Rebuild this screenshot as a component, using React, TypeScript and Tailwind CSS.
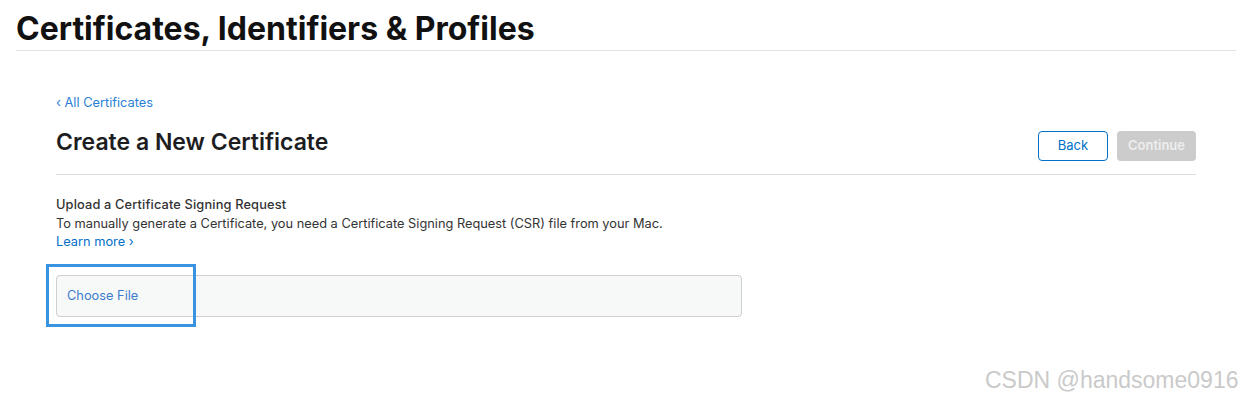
import React from "react";

export default function App() {
  return (
    <div className="w-[1242px] h-[399px] bg-white relative overflow-hidden" style={{ fontFamily: "Inter, 'Noto Sans', sans-serif" }}>
      <div className="pl-4 pr-[6px]">
        <div className="pt-[10px] pb-[3px] border-b border-[#e3e3e3]">
          <h1 className="text-[32px] leading-[37px] font-bold text-[#111]">Certificates, Identifiers &amp; Profiles</h1>
        </div>
      </div>
      <div className="ml-[56px] w-[1140px]">
        <div className="pt-[44px] text-[12.8px] leading-[16px] text-[#2a7fd4]">‹ All Certificates</div>
        <div className="flex items-start justify-between border-b border-[#dcdcdc] pb-[13px]">
          <h2 className="mt-[17px] text-[23px] leading-[28px] font-semibold text-[#1d1d1f]">Create a New Certificate</h2>
          <div className="flex gap-[9px] mt-[20px]">
            <button className="w-[70px] h-[30px] rounded-[4px] border border-[#0070c9] text-[#0070c9] text-[13px]">Back</button>
            <button className="w-[79px] h-[30px] rounded-[4px] bg-[#cccccc] text-[#eeeeee] text-[13px] font-semibold">Continue</button>
          </div>
        </div>
        <div className="pt-[21px] text-[12.8px] leading-[18.5px]">
          <div className="font-medium text-[#333] tracking-[0.15px]">Upload a Certificate Signing Request</div>
          <div className="text-[#333]">To manually generate a Certificate, you need a Certificate Signing Request (CSR) file from your Mac.</div>
          <div className="text-[#0070c9]">Learn more ›</div>
        </div>
        <div className="mt-[23px] w-[686px] h-[42px] rounded-[4px] border border-[#cfcfcf] bg-[#f7f8f8] flex items-center pl-[10px] text-[12.8px] text-[#3d7ccc]">
          Choose File
        </div>
      </div>
      <div className="absolute left-[46px] top-[264px] w-[150px] h-[63px] border-[3px] border-[#3a93e1]"></div>
      <div className="absolute left-[985px] top-[364px] text-[23px] leading-[32px] text-[#cacaca]" style={{ fontFamily: "'Liberation Sans', Arial, sans-serif" }}>CSDN @handsome0916</div>
    </div>
  );
}
